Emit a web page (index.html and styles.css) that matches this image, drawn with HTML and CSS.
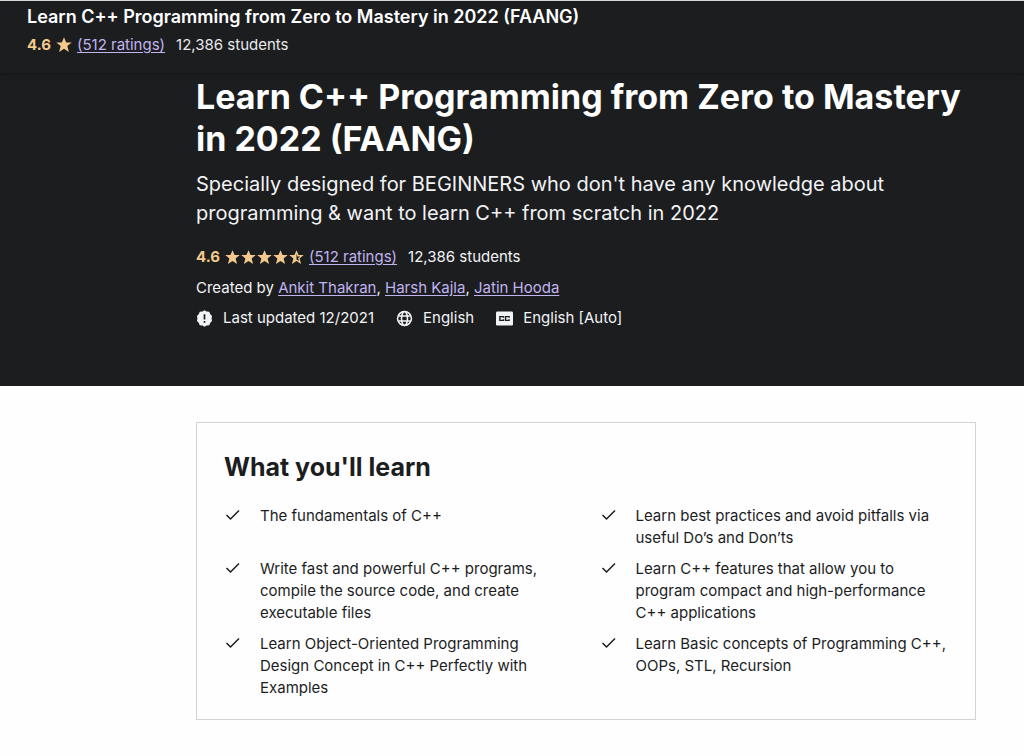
FILE: index.html
```html
<!DOCTYPE html>
<html lang="en">
<head>
<meta charset="utf-8">
<meta name="viewport" content="width=device-width, initial-scale=1">
<title>Learn C++ Programming from Zero to Mastery in 2022 (FAANG)</title>
<link rel="stylesheet" href="styles.css">
</head>
<body>
<svg class="sprite" aria-hidden="true">
  <symbol id="star" viewBox="0 0 16 16"><path d="M8 .3l2.200 5.100h5.500l-4.400 3.600 1.600 5.900L8 11.700l-4.900 3.200 1.600-5.900L.3 5.400h5.500z"/></symbol>
  <symbol id="star-half" viewBox="0 0 16 16"><path fill-rule="evenodd" d="M8 .3l2.200 5.100h5.500l-4.400 3.600 1.600 5.900L8 11.700l-4.900 3.200 1.600-5.900L.3 5.400h5.500zM8 4v6l2.600 1.700-.9-3.200 2.300-1.700H9.100z"/></symbol>
  <symbol id="check" viewBox="0 0 16 16"><path fill="none" stroke="currentColor" stroke-width="1.500" d="M2.500 8l4 4L15 3.500"/></symbol>
</svg>
<header class="topbar">
  <p class="topbar-title">Learn C++ Programming from Zero to Mastery in 2022 (FAANG)</p>
  <div class="rating-row">
    <span class="score">4.6</span>
    <svg class="star-lg"><use href="#star"/></svg>
    <a class="ratings" href="#reviews">(512 ratings)</a>
    <span>12,386 students</span>
  </div>
</header>
<section class="hero">
  <h1>Learn C++ Programming from Zero to Mastery in 2022 (FAANG)</h1>
  <p class="lead">Specially designed for BEGINNERS who don't have any knowledge about programming &amp; want to learn C++ from scratch in 2022</p>
  <div class="rating-row">
    <span class="score">4.6</span>
    <span class="stars"><svg><use href="#star"/></svg><svg><use href="#star"/></svg><svg><use href="#star"/></svg><svg><use href="#star"/></svg><svg><use href="#star-half"/></svg></span>
    <a class="ratings" href="#reviews">(512 ratings)</a>
    <span>12,386 students</span>
  </div>
  <p class="authors">Created by <a href="#ankit">Ankit Thakran</a>, <a href="#harsh">Harsh Kajla</a>, <a href="#jatin">Jatin Hooda</a></p>
  <ul class="meta">
    <li><svg viewBox="0 0 24 24"><path fill="currentColor" fill-rule="evenodd" d="M12 .5l3 1.700 3.700.4 1.500 3.400 2.400 2.500L22 12l.6 3.500-2.400 2.500-1.500 3.400-3.700.4-3 1.700-3-1.700-3.700-.4L3.800 18l-2.400-2.500L2 12l-.6-3.500L3.800 6l1.500-3.400L9 2.200zM10.800 15.500h2.400v2.400h-2.400zM10.800 6h2.400v7.500h-2.400z"/></svg>Last updated 12/2021</li>
    <li><svg viewBox="0 0 24 24"><g fill="none" stroke="currentColor" stroke-width="2.200"><circle cx="12" cy="12" r="9.800"/><ellipse cx="12" cy="12" rx="4.200" ry="9.800"/><path d="M3 8.500h18M3 15.500h18"/></g></svg>English</li>
    <li><svg viewBox="0 0 24 24"><rect x="0" y="2" width="24" height="20" rx="2" fill="currentColor"/><path fill="none" stroke="#1c1d1f" stroke-width="2" d="M10.500 11V9.300H5.500v5.400h5V13M18.500 11V9.300h-5v5.400h5V13"/></svg>English [Auto]</li>
  </ul>
</section>
<main class="content">
  <section class="learn">
    <h2>What you'll learn</h2>
    <ul class="goals">
      <li><svg><use href="#check"/></svg><span>The fundamentals of C++</span></li>
      <li><svg><use href="#check"/></svg><span>Learn best practices and avoid pitfalls via useful Do’s and Don’ts</span></li>
      <li><svg><use href="#check"/></svg><span>Write fast and powerful C++ programs, compile the source code, and create executable files</span></li>
      <li><svg><use href="#check"/></svg><span>Learn C++ features that allow you to program compact and high-performance C++ applications</span></li>
      <li><svg><use href="#check"/></svg><span>Learn Object-Oriented Programming Design Concept in C++ Perfectly with Examples</span></li>
      <li><svg><use href="#check"/></svg><span>Learn Basic concepts of Programming C++, OOPs, STL, Recursion</span></li>
    </ul>
  </section>
</main>
</body>
</html>
```
FILE: styles.css
```css
* { box-sizing: border-box; }
body {
  margin: 0;
  background: #fefefe;
  color: #1c1d1f;
  font: 15px/22px Inter, "Liberation Sans", sans-serif;
}
h1, h2, p, ul { margin: 0; padding: 0; }
ul { list-style: none; }
svg { flex: none; fill: currentColor; }
.sprite { position: absolute; width: 0; height: 0; }
.topbar {
  padding: 5px 27px 17px;
  border-top: 1px solid #d1d7dc;
  background: #1c1d1f;
  color: #e8e9eb;
  box-shadow: 0 1px 3px #151618;
  position: relative;
}
.topbar-title {
  margin-bottom: 6px;
  color: #fff;
  font-size: 18px;
  font-weight: 600;
}
.rating-row { display: flex; align-items: center; }
.score { margin-right: 5px; color: #f3ca8c; font-weight: 700; }
.star-lg { width: 16px; height: 16px; color: #f3ca8c; }
.stars { display: flex; color: #f3ca8c; gap: 1px; }
.stars svg { width: 15px; height: 15px; }
.ratings { margin: 0 11px 0 5px; }
a { color: #c0b3f0; text-underline-offset: 2px; }
.hero {
  padding: 3px 48px 57px 196px;
  background: #1c1d1f;
  color: #f2f3f5;
}
h1 { color: #fff; font-size: 34px; line-height: 42px; font-weight: 650; }
.lead { margin: 10px 0 18px; font-size: 20px; line-height: 29px; }
.authors { margin: 9px 0 8px; }
.meta { display: flex; flex-wrap: wrap; column-gap: 22px; }
.meta li { display: flex; align-items: center; gap: 10px; }
.meta svg { width: 17px; height: 17px; }
.content { padding: 36px 48px 36px 196px; }
.learn { padding: 27px 27px 20px; border: 1px solid #d1d3d6; }
h2 { margin-bottom: 21px; font-size: 25px; line-height: 34px; font-weight: 700; }
.goals { display: grid; grid-template-columns: 1fr 1fr; column-gap: 27px; row-gap: 9px; }
.goals li { display: flex; gap: 20px; }
.goals li:nth-child(odd) { padding-right: 12px; }
.goals svg { width: 16px; height: 16px; margin-top: 2px; }
```
